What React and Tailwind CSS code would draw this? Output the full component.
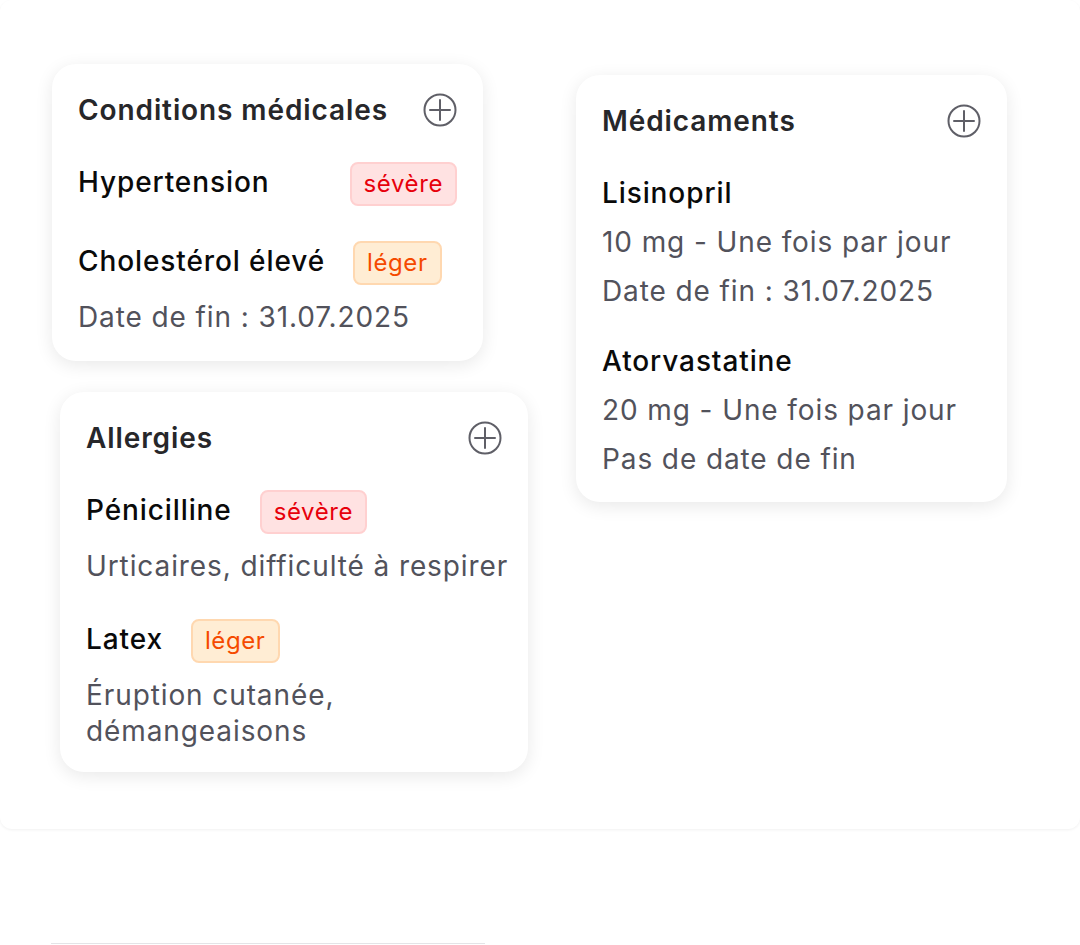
import { Fragment } from "react";

const conditions = [
  { name: "Hypertension", level: "severe", spread: true, details: [] },
  { name: "Cholestérol élevé", level: "mild", details: ["Date de fin : 31.07.2025"] },
];

const allergies = [
  { name: "Pénicilline", level: "severe", details: ["Urticaires, difficulté à respirer"] },
  { name: "Latex", level: "mild", details: ["Éruption cutanée, démangeaisons"] },
];

const meds = [
  { name: "Lisinopril", details: ["10 mg - Une fois par jour", "Date de fin : 31.07.2025"] },
  { name: "Atorvastatine", details: ["20 mg - Une fois par jour", "Pas de date de fin"] },
];

function PlusCircle() {
  return (
    <svg width="34" height="34" viewBox="0 0 34 34" fill="none" stroke="#5f5f67" strokeWidth="2" strokeLinecap="round">
      <circle cx="17" cy="17" r="15.5" />
      <path d="M7 17h20M17 7v20" />
    </svg>
  );
}

function Badge({ level, className = "" }) {
  const severe = level === "severe";
  return (
    <span
      className={
        "shrink-0 rounded-lg border-2 px-3 py-1 text-[24px] leading-[32px] tracking-[0.6px] " +
        (severe
          ? "border-[#ffd0d0] bg-[#ffe2e2] text-[#e7000b] "
          : "border-[#ffd8b0] bg-[#ffedd4] text-[#f54a00] ") +
        className
      }
    >
      {severe ? "sévère" : "léger"}
    </span>
  );
}

function Card({ title, items, className = "", listClassName = "gap-[35px]" }) {
  return (
    <div className={"rounded-3xl bg-white px-[26px] pt-[26px] shadow-[0_4px_18px_rgba(0,0,0,0.09)] " + className}>
      <div className="mb-[32px] flex items-center justify-between">
        <h3 className="text-[28px] font-semibold leading-[40px] tracking-[0.9px] text-[#27272a]">{title}</h3>
        <PlusCircle />
      </div>
      <div className={"flex flex-col " + listClassName}>
        {items.map((it) => (
          <div key={it.name}>
            {it.level ? (
              <div className="flex h-[44px] items-center gap-7">
                <span className="pb-1 text-[28px] font-medium leading-[40px] tracking-[0.9px] text-[#0a0a0a]">{it.name}</span>
                <Badge level={it.level} className={it.spread ? "ml-auto" : ""} />
              </div>
            ) : (
              <div className="text-[28px] font-medium leading-[40px] tracking-[0.9px] text-[#0a0a0a]">{it.name}</div>
            )}
            {it.details.map((d, i) => (
              <Fragment key={d}>
                <p
                  className={
                    "text-[28px] leading-[36px] tracking-[0.9px] text-[#52525b] " +
                    (it.level ? "mt-[14px]" : i === 0 ? "mt-[11px]" : "mt-[13px]")
                  }
                >
                  {d}
                </p>
              </Fragment>
            ))}
          </div>
        ))}
      </div>
    </div>
  );
}

export default function App() {
  return (
    <div className="h-[945px] overflow-hidden bg-white font-[Inter,sans-serif]">
      <div className="flex h-[829px] items-start rounded-xl bg-white shadow-[0_1px_3px_rgba(0,0,0,0.06)]">
        <div className="flex flex-col items-start">
          <Card title="Conditions médicales" items={conditions} className="ml-[52px] mt-[64px] w-[431px] pb-[26px]" />
          <Card
            title="Allergies"
            items={allergies}
            className="ml-[60px] mt-[31px] w-[468px] pb-[23px]"
            listClassName="-mr-3 gap-[35px]"
          />
        </div>
        <Card
          title="Médicaments"
          items={meds}
          className="ml-[48px] mt-[75px] w-[431px] pb-[25px]"
          listClassName="gap-[32px]"
        />
      </div>
      <div className="ml-[51px] mt-[114px] h-px w-[434px] bg-[#e4e4e7]" />
    </div>
  );
}
